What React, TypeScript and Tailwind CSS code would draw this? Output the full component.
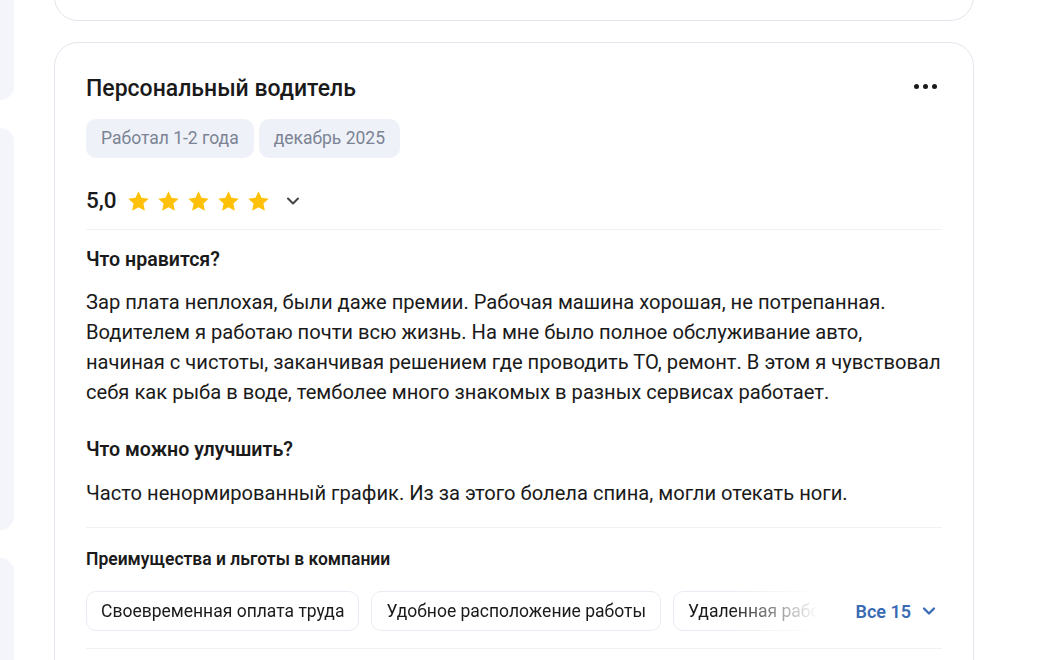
import { ChevronDown } from 'lucide-react'

function Star() {
  return (
    <svg viewBox="0 0 24 24" className="w-[25px] h-[25px]" fill="#ffc107">
      <path d="M12 2.2l2.9 6.3 6.9.8-5.1 4.7 1.4 6.8L12 17.4l-6.1 3.4 1.4-6.8L2.2 9.3l6.9-.8z" />
    </svg>
  )
}

const perks = ['Своевременная оплата труда', 'Удобное расположение работы', 'Удаленная работа']

export default function App() {
  return (
    <div
      className="h-[660px] w-[1058px] overflow-hidden bg-white flex text-[#1a1a1a]"
      style={{ fontFamily: 'Roboto, "Noto Sans", sans-serif' }}
    >
      {/* left column stubs */}
      <div className="w-[14px] flex flex-col gap-[28px] shrink-0 -mt-[100px]">
        <div className="h-[200px] shrink-0 rounded-r-[14px] bg-[#f4f5fa]" />
        <div className="h-[402px] shrink-0 rounded-r-[14px] bg-[#f4f5fa]" />
        <div className="h-[300px] shrink-0 rounded-r-[14px] bg-[#f4f5fa]" />
      </div>

      <div className="ml-[40px] w-[920px] flex flex-col gap-[21px] -mt-[100px]">
        <div className="h-[121px] shrink-0 rounded-[24px] border border-[#e2e5ec] bg-white" />

        <div className="shrink-0 rounded-[24px] border border-[#e2e5ec] bg-white px-[31px] pt-[31px] pb-[40px]">
          <div className="flex items-center justify-between">
            <h2 className="text-[23px] leading-[30px] font-medium">Персональный водитель</h2>
            <div className="flex gap-[4px] pr-[5px] -mt-[5px]">
              <span className="w-[5px] h-[5px] rounded-full bg-[#1a1a1a]" />
              <span className="w-[5px] h-[5px] rounded-full bg-[#1a1a1a]" />
              <span className="w-[5px] h-[5px] rounded-full bg-[#1a1a1a]" />
            </div>
          </div>

          <div className="mt-[15px] flex gap-[5px]">
            <span className="h-[39px] px-[15px] rounded-[10px] bg-[#eef1f7] text-[#7b8394] text-[17.5px] flex items-center">
              Работал 1-2 года
            </span>
            <span className="h-[39px] px-[15px] rounded-[10px] bg-[#eef1f7] text-[#7b8394] text-[17.5px] flex items-center">
              декабрь 2025
            </span>
          </div>

          <div className="mt-[27px] flex items-center h-[32px]">
            <span className="text-[22.5px] font-medium mr-[9px]">5,0</span>
            <div className="flex gap-[5px]">
              <Star />
              <Star />
              <Star />
              <Star />
              <Star />
            </div>
            <ChevronDown className="ml-[12px] w-[20px] h-[20px] text-[#444]" strokeWidth={2.4} />
          </div>

          <div className="mt-[12px] h-px bg-[#f0f1f4]" />

          <h3 className="mt-[18px] text-[19.6px] font-semibold leading-[24px]">Что нравится?</h3>
          <p className="mt-[15px] text-[20.15px] leading-[30px]">
            Зар плата неплохая, были даже премии. Рабочая машина хорошая, не потрепанная.
            <br />
            Водителем я работаю почти всю жизнь. На мне было полное обслуживание авто,
            <br />
            начиная с чистоты, заканчивая решением где проводить ТО, ремонт. В этом я чувствовал
            <br />
            себя как рыба в воде, темболее много знакомых в разных сервисах работает.
          </p>

          <h3 className="mt-[31px] text-[19.6px] font-semibold leading-[24px]">Что можно улучшить?</h3>
          <p className="mt-[16px] text-[20.15px] leading-[30px]">
            Часто ненормированный график. Из за этого болела спина, могли отекать ноги.
          </p>

          <div className="mt-[19px] h-px bg-[#f0f1f4]" />

          <h3 className="mt-[19px] text-[17.5px] font-semibold leading-[24px]">Преимущества и льготы в компании</h3>

          <div className="mt-[20px] flex items-center">
            <div className="w-[732px] overflow-hidden flex gap-[12px] [mask-image:linear-gradient(to_right,black_88%,transparent_100%)]">
              {perks.map(p => (
                <span
                  key={p}
                  className="shrink-0 h-[40px] px-[14px] rounded-[10px] border border-[#e8ebf2] text-[17.5px] flex items-center whitespace-nowrap"
                >
                  {p}
                </span>
              ))}
            </div>
            <button className="ml-auto mr-[3px] flex items-center gap-[8px] text-[#3a6bb3] text-[18px] font-semibold">
              Все 15
              <ChevronDown className="w-[20px] h-[20px]" strokeWidth={2.8} />
            </button>
          </div>

          <div className="mt-[17px] h-px bg-[#f0f1f4]" />
        </div>
      </div>
    </div>
  )
}
